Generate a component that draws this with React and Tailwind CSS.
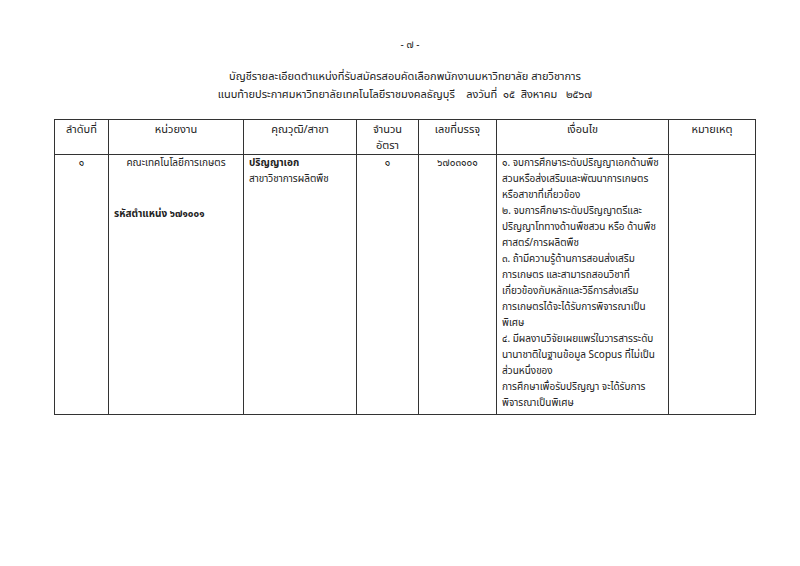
import React from 'react';

const conditions = [
    '๑. จบการศึกษาระดับปริญญาเอกด้านพืช',
    'สวนหรือส่งเสริมและพัฒนาการเกษตร',
    'หรือสาขาที่เกี่ยวข้อง',
    '๒. จบการศึกษาระดับปริญญาตรีและ',
    'ปริญญาโททางด้านพืชสวน หรือ ด้านพืช',
    'ศาสตร์/การผลิตพืช',
    '๓. ถ้ามีความรู้ด้านการสอนส่งเสริม',
    'การเกษตร และสามารถสอนวิชาที่',
    'เกี่ยวข้องกับหลักและวิธีการส่งเสริม',
    'การเกษตรได้จะได้รับการพิจารณาเป็น',
    'พิเศษ',
    '๔. มีผลงานวิจัยเผยแพร่ในวารสารระดับ',
    'นานาชาติในฐานข้อมูล Scopus ที่ไม่เป็น',
    'ส่วนหนึ่งของ',
    'การศึกษาเพื่อรับปริญญา จะได้รับการ',
    'พิจารณาเป็นพิเศษ',
];

const headers = [
    { label: 'ลำดับที่', w: 'w-[54px]' },
    { label: 'หน่วยงาน', w: 'w-[135px]' },
    { label: 'คุณวุฒิ/สาขา', w: 'w-[113px]' },
    { label: 'จำนวน\nอัตรา', w: 'w-[62px]' },
    { label: 'เลขที่บรรจุ', w: 'w-[78px]' },
    { label: 'เงื่อนไข', w: 'w-[172px]' },
    { label: 'หมายเหตุ', w: 'w-[87px]' },
];

const App = () => {
    return (
        <div
            className="w-[800px] h-[566px] bg-white text-[#222] overflow-hidden"
            style={{ fontFamily: '"Noto Sans Thai", "Noto Sans", "Liberation Sans", sans-serif' }}
        >
            {/* Page number */}
            <div className="pt-[36px] text-center text-[10px] leading-[18px] pl-[20px]">- ๗ -</div>

            {/* Title */}
            <div className="mt-[14px] text-center text-[11px] leading-[18px] pl-[10px]">
                <p>บัญชีรายละเอียดตำแหน่งที่รับสมัครสอบคัดเลือกพนักงานมหาวิทยาลัย สายวิชาการ</p>
                <p>
                    แนบท้ายประกาศมหาวิทยาลัยเทคโนโลยีราชมงคลธัญบุรี&nbsp;&nbsp;&nbsp;&nbsp;ลงวันที่&nbsp;&nbsp;๑๕&nbsp;&nbsp;สิงหาคม&nbsp;&nbsp;&nbsp;๒๕๖๗
                </p>
            </div>

            {/* Table */}
            <div className="mt-[15px] pl-[54px]">
                <table className="w-[701px] table-fixed border-collapse border border-[#333] text-[10px] leading-[16px]">
                    <thead>
                        <tr>
                            {headers.map((h) => (
                                <th
                                    key={h.label}
                                    className={`${h.w} border border-[#333] align-top pt-[2px] pb-0 font-normal text-center whitespace-pre-line text-[11px] leading-[16px]`}
                                >
                                    {h.label}
                                </th>
                            ))}
                        </tr>
                    </thead>
                    <tbody>
                        <tr>
                            <td className="border border-[#333] align-top text-center">๑</td>
                            <td className="border border-[#333] align-top px-[5px]">
                                <p className="text-center">คณะเทคโนโลยีการเกษตร</p>
                                <p className="mt-[35px] font-bold">รหัสตำแหน่ง ๖๗๑๐๐๑</p>
                            </td>
                            <td className="border border-[#333] align-top px-[5px]">
                                <p className="font-bold">ปริญญาเอก</p>
                                <p>สาขาวิชาการผลิตพืช</p>
                            </td>
                            <td className="border border-[#333] align-top text-center">๑</td>
                            <td className="border border-[#333] align-top text-center">๖๗๐๓๑๐๑</td>
                            <td className="border border-[#333] align-top pl-[5px] pb-[3px]">
                                {conditions.map((line, i) => (
                                    <p key={i} className="whitespace-nowrap">{line}</p>
                                ))}
                            </td>
                            <td className="border border-[#333] align-top"></td>
                        </tr>
                    </tbody>
                </table>
            </div>
        </div>
    );
};

export default App;
